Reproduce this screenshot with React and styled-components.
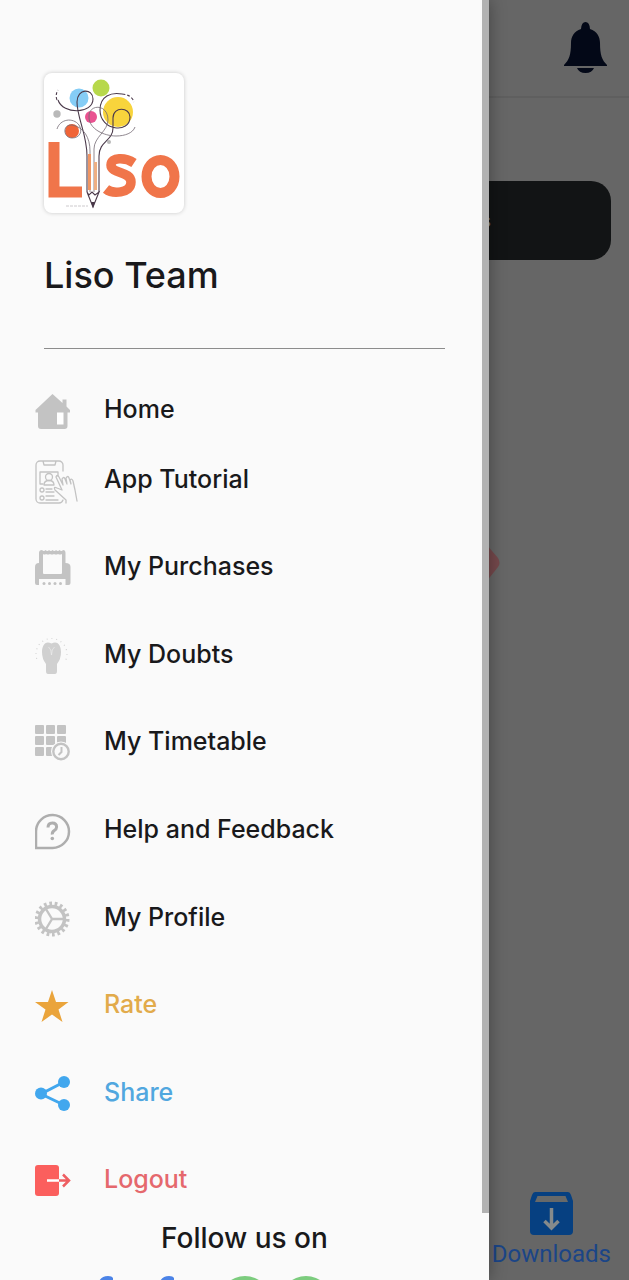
import React from "react";
import styled, { createGlobalStyle } from "styled-components";

const GlobalStyle = createGlobalStyle`
    *, *::before, *::after {
        box-sizing: border-box;
    }

    body {
        margin: 0;
        background: #666666;
        font-family: Inter, "Noto Sans", sans-serif;
        color: #19191b;
    }
`;

const Screen = styled.div`
    position: relative;
    display: flex;
    flex-direction: column;
    height: 100vh;
    min-height: 640px;
    overflow: hidden;
    background: #666666;
`;

const TopBar = styled.header`
    display: flex;
    align-items: center;
    justify-content: flex-end;
    height: 98px;
    padding: 0 22px;
    border-bottom: 2px solid #5f5f5f;
`;

const IconButton = styled.button`
    display: flex;
    padding: 0;
    border: 0;
    background: none;
`;

const Content = styled.main`
    display: flex;
    flex: 1;
    flex-direction: column;
    align-items: flex-end;
    padding: 83px 18px 0;
`;

const Banner = styled.button`
    width: 100%;
    height: 79px;
    padding: 0 120px 0 0;
    border: 0;
    border-radius: 20px;
    background: #121415;
    color: #77797a;
    font: 500 18px/24px Inter, sans-serif;
    text-align: right;
`;

const Marker = styled.svg`
    margin: 284px 111px 0 0;
`;

const BottomBar = styled.nav`
    display: flex;
    justify-content: flex-end;
    padding: 0 18px 12px;
`;

const Tab = styled.a`
    display: flex;
    flex-direction: column;
    align-items: center;
    gap: 5px;
    color: #1b4587;
    font: 400 24px/28px Roboto, sans-serif;
    text-decoration: none;
`;

const Drawer = styled.aside`
    position: absolute;
    top: 0;
    bottom: 0;
    left: 0;
    width: 489px;
    max-width: 80vw;
    overflow: hidden;
    padding-top: 73px;
    background: #fafafa;
    box-shadow: 0 0 16px rgba(0, 0, 0, 0.35);
`;

const ScrollThumb = styled.div`
    position: absolute;
    top: 0;
    right: 0;
    width: 7px;
    height: 1213px;
    background: #b2b2b2;
`;

const Profile = styled.div`
    margin: 0 44px 34px;
    padding-bottom: 51px;
    border-bottom: 1px solid #8c8c8c;
`;

const Logo = styled.svg`
    display: block;
    border-radius: 8px;
    background: #ffffff;
    box-shadow: 0 0 4px rgba(0, 0, 0, 0.2);
`;

const Name = styled.h1`
    margin: 40px 0 0;
    font-size: 36px;
    font-weight: 500;
    line-height: 44px;
`;

const Menu = styled.ul`
    display: grid;
    grid-template-rows: 52px;
    grid-auto-rows: 1fr;
    height: 840px;
    margin: 0;
    padding: 0 24px 0 35px;
    list-style: none;
`;

const MenuItem = styled.li`
    display: flex;
    align-items: center;
`;

const MenuLink = styled.a`
    display: flex;
    align-items: center;
    gap: 25px;
    color: ${props => props.$color || "inherit"};
    font-size: 25px;
    font-weight: 500;
    line-height: 32px;
    text-decoration: none;
`;

const MenuIcon = styled.svg`
    flex: none;
    margin-top: 6px;
`;

const Follow = styled.h2`
    margin: 0;
    font-size: 28px;
    font-weight: 500;
    line-height: 30px;
    text-align: center;
`;

const Socials = styled.div`
    display: flex;
    gap: 9px;
    padding: 23px 0 0 97px;
`;

const SocialLink = styled.a`
    display: block;
    width: 52px;
    height: 52px;
`;

const GREY = "#c3c3c3";

const HomeIcon = () => (
    <g fill={GREY}>
        <path d="M17.500 4 27.500 13V9.500h4V16.500L35 20v2.500h-2.500V36a3 3 0 0 1-3 3H6a3 3 0 0 1-3-3V22.500H.500V20z" />
        <path fill="#fff" d="M22 22.500h6.500V34.500H22z" />
    </g>
);

const TutorialIcon = () => (
    <g fill="none" stroke={GREY} strokeWidth="1.300" strokeLinecap="round" strokeLinejoin="round">
        <path d="M28 11V5a4 4 0 0 0-4-4H5a4 4 0 0 0-4 4v34a4 4 0 0 0 4 4h19q3 0 4-3M8 1l1 4h11l1-4M8 24H5V12h18v4" />
        <circle cx="14" cy="17" r="3.500" />
        <path d="M9 25q0-4.500 5-4.500t5 4.500zM11 29h6M11 32h8M11 36h8M11 40h12" />
        <circle cx="7" cy="30" r="2" />
        <circle cx="7" cy="38" r="2" />
        <path d="M31 43v-3l-11-10q-2-4 2-2l5 2-6-13q1-3 3 0l4 8-1-6q2-3 3 0l2 5-1-6q2-3 3 0l2 6-1-4q2-2 3 1l2 9 2 11" />
    </g>
);

const PurchasesIcon = () => (
    <g fill={GREY}>
        <path d="M0 20q0-4 4-4V6q0-3 3-3 2 2 3.500 0 2 2 3.500 0 2 2 3.500 0 2 2 3.500 0 2 2 3.500 0 2 2 3.500 0 2.500 0 2.500 3v10q5 0 5 4v16q0 2-2 2h-3v-6H4v6H2q-2 0-2-2z" />
        <path fill="#fafafa" d="M8 7q1.500 1 3 0 2 1 4 0 2 1 4 0 2 1 4 0 2 1 4 0v19q0 1-1 1H9q-1 0-1-1z" />
        <circle cx="9" cy="36.500" r="1.500" />
        <circle cx="14.500" cy="36.500" r="1.500" />
        <circle cx="20" cy="36.500" r="1.500" />
        <circle cx="25.500" cy="36.500" r="1.500" />
    </g>
);

const DoubtsIcon = () => (
    <g fill="#d0d0d0" stroke="#d0d0d0">
        <path stroke="none" d="M16.500 8.500C23 5 26 11 26 17q0 7-4 12v7q0 3-2 3h-7q-2 0-2-3v-7q-4-5-4-12C7 11 10 5 16.500 8.500z" />
        <path stroke="#ececec" strokeWidth=".7" fill="none" d="M13.500 12q3 2 3 8 0-6 3-8" />
        <circle cx="16.500" cy="19" r="15.500" fill="none" strokeWidth="1.200" strokeDasharray=".8 3.700" pathLength="90" style={{ clipPath: "inset(-1px -1px 8px -1px)" }} />
    </g>
);

const TimetableIcon = () => (
    <g fill={GREY}>
        {[3, 14, 25].map(y => [0, 11, 22].map(x => (
            <rect key={`${x}-${y}`} x={x} y={y} width="9" height="9" rx="1" />
        )))}
        <circle cx="26" cy="29.500" r="10" fill="#fafafa" />
        <circle cx="26" cy="29.500" r="7.700" fill="#fafafa" stroke={GREY} strokeWidth="2.400" />
        <path d="M26.500 25v5l-3 3" fill="none" stroke={GREY} strokeWidth="2" />
    </g>
);

const HelpIcon = () => (
    <g fill="none" stroke="#aeaeae" strokeWidth="2.500">
        <path d="M1.500 37.500V20.500a16.500 16.500 0 1 1 16.500 17z" transform="translate(-.5 .5)" />
        <path d="M13 17.500q0-4.500 4.300-4.500t4.300 4q0 2-2.300 3.500t-2 4" strokeWidth="3" />
        <circle cx="17.300" cy="28.500" r="1.800" fill="#aeaeae" stroke="none" />
    </g>
);

const ProfileIcon = () => (
    <g fill="none" stroke={GREY}>
        <circle cx="17" cy="21" r="15.500" strokeWidth="4" strokeDasharray="2.500 2.500" pathLength="90" />
        <circle cx="17" cy="21" r="12.500" strokeWidth="3.500" />
        <path d="M10 9.500 17 21l-7 11.500M17 21h13" strokeWidth="2.400" />
    </g>
);

const RateIcon = () => (
    <path fill="#eaa43b" d="m17 5 4 12h12.500L23.500 24.500 27.500 37 17 29.500 6.500 37l4-12.500L0 17h13z" />
);

const ShareIcon = () => (
    <g fill="#41a7ee" stroke="#41a7ee">
        <path d="M29 9 6 21l23 11" fill="none" strokeWidth="3" />
        <circle cx="29" cy="9" r="6" stroke="none" />
        <circle cx="6" cy="20.500" r="6" stroke="none" />
        <circle cx="29" cy="32" r="6" stroke="none" />
    </g>
);

const LogoutIcon = () => (
    <g fill="none" strokeWidth="2.500">
        <rect y="5" width="24" height="31" rx="3" fill="#fb5f5d" />
        <path d="M12 20.500h12" stroke="#fff" />
        <path d="M24 20.500h10M28 14.500l6 6-6 6" stroke="#ee5e61" />
    </g>
);

const items = [
    { label: "Home", Icon: HomeIcon },
    { label: "App Tutorial", Icon: TutorialIcon },
    { label: "My Purchases", Icon: PurchasesIcon },
    { label: "My Doubts", Icon: DoubtsIcon },
    { label: "My Timetable", Icon: TimetableIcon },
    { label: "Help and Feedback", Icon: HelpIcon },
    { label: "My Profile", Icon: ProfileIcon },
    { label: "Rate", Icon: RateIcon, color: "#e2ab4b" },
    { label: "Share", Icon: ShareIcon, color: "#51a7df" },
    { label: "Logout", Icon: LogoutIcon, color: "#e5686d" }
];

const LisoLogo = () => (
    <Logo width="140" height="140" viewBox="0 0 140 140" role="img" aria-label="Liso">
        <circle cx="35" cy="25" r="9.500" fill="#85cdf6" />
        <circle cx="57" cy="15" r="8.500" fill="#b7d84b" />
        <circle cx="74" cy="39" r="15" fill="#f8d43c" />
        <circle cx="47" cy="44" r="6" fill="#e95391" />
        <circle cx="28" cy="58" r="7" fill="#f06437" />
        <circle cx="13" cy="41" r="3.700" fill="#b9b9b9" />
        <circle cx="65" cy="69" r="2" fill="#b9b9b9" />
        <g fill="none" stroke="#4b3a4b" strokeWidth="1.100">
            <path d="M43 119V83C43 61 33 45 33 29c0-14 16-14 16-3 0 15-30 16-35 1" />
            <path d="M13 27q-2-5 1-10M78 21q10 1 12 8" strokeDasharray="3 2" />
            <path d="M55 119V83c0-15 14-15 14-28V45c0-12 17-11 17-1 0 17-30 14-30-7 0-14 11-18 22-16" />
            <path d="M46 119V78c0-13-6-24-18-26-10-1-9 13 0 13 8 0 11-7 7-13-6-8-19-6-22 4" stroke="#746a73" strokeWidth=".8" />
            <path d="M50 119V76c0-12 14-18 14-29 0-17-20-16-19-3 0 12 15 19 27 19 9 0 17-3 19-9" stroke="#746a73" strokeWidth=".8" />
            <path d="M43 119l6 15 6-15-4 3-3-3-3 3z" />
        </g>
        <path d="M44 81h3v36h-3z" fill="#ef9563" />
        <path d="M50 89h3v28h-3z" fill="#efaf83" />
        <path d="m47 129 2 6 2-6z" fill="#493848" />
        <path d="M22 133h22" stroke="#cdcacd" strokeDasharray="3 1" />
        <g fill="none" stroke="#f0754a">
            <path d="M10 69v50h28" strokeWidth="11" />
            <path d="M90 90C81 84 67 84 67 92c0 9 20 6 20 17 0 12-19 12-25 7" strokeWidth="9.500" />
            <ellipse cx="116.500" cy="103.500" rx="14" ry="16.500" strokeWidth="10" />
        </g>
    </Logo>
);

const BellIcon = () => (
    <svg width="43" height="52" viewBox="0 0 43 52" aria-hidden="true">
        <path fill="#030817" d="M21.500 0q4 0 4.500 7c7 2 10 8 10 14 0 12 2 17 7 22v1H0v-1c5-5 7-10 7-22 0-6 3-12 10-14q.5-7 4.500-7zM13 46h17q-2 5-8.500 5T13 46z" />
    </svg>
);

const DownloadIcon = () => (
    <svg width="43" height="43" viewBox="0 0 43 43" aria-hidden="true">
        <path fill="#064081" d="M5 0h33q2 0 3 3l2 6v30q0 4-4 4H4q-4 0-4-4V9l2-6q1-3 3-3z" />
        <path fill="#676969" d="M7.500 4h28l2.500 6H5z" />
        <path d="M21.500 16v19M14.500 29l7 7 7-7" fill="none" stroke="#858a8b" strokeWidth="3.500" />
    </svg>
);

const FacebookIcon = () => (
    <path fill="#4b83e7" d="M18 52V31h-8v-8h8v-7Q18 0 29 0q4 0 5 2v7h-4q-4 0-4 6v8h8l-1 8h-7v21z" transform="translate(-18)" />
);

const WhatsappIcon = () => (
    <g>
        <circle cx="26" cy="26" r="26" fill="#7ccc7e" />
        <path fill="#fff" d="M18 13q-8 7 2 17t18 4l1-5-7-3-3 3q-5-2-7-7l2-3-3-6z" />
    </g>
);

const socials = [
    { name: "Facebook page", Icon: FacebookIcon },
    { name: "Facebook group", Icon: FacebookIcon },
    { name: "WhatsApp chat", Icon: WhatsappIcon },
    { name: "WhatsApp group", Icon: WhatsappIcon }
];

const App = () => (
    <Screen>
        <GlobalStyle />
        <TopBar>
            <IconButton type="button" aria-label="Notifications">
                <BellIcon />
            </IconButton>
        </TopBar>
        <Content>
            <Banner type="button">s</Banner>
            <Marker width="20" height="38" viewBox="0 0 20 38" aria-hidden="true">
                <path d="M0 0h6l12 14q3 5 0 9L6 38H0z" fill="#74484b" />
            </Marker>
        </Content>
        <BottomBar>
            <Tab href="#downloads">
                <DownloadIcon />
                Downloads
            </Tab>
        </BottomBar>
        <Drawer>
            <Profile>
                <LisoLogo />
                <Name>Liso Team</Name>
            </Profile>
            <Menu>
                {items.map(({ label, Icon, color }) => (
                    <MenuItem key={label}>
                        <MenuLink href="#menu" $color={color}>
                            <MenuIcon width="44" height="44" viewBox="0 0 44 44" aria-hidden="true">
                                <Icon />
                            </MenuIcon>
                            {label}
                        </MenuLink>
                    </MenuItem>
                ))}
            </Menu>
            <Follow>Follow us on</Follow>
            <Socials>
                {socials.map(({ name, Icon }) => (
                    <SocialLink key={name} href="#social" aria-label={name}>
                        <svg width="52" height="52" viewBox="0 0 52 52" overflow="visible" aria-hidden="true">
                            <Icon />
                        </svg>
                    </SocialLink>
                ))}
            </Socials>
            <ScrollThumb />
        </Drawer>
    </Screen>
);

export default App;
